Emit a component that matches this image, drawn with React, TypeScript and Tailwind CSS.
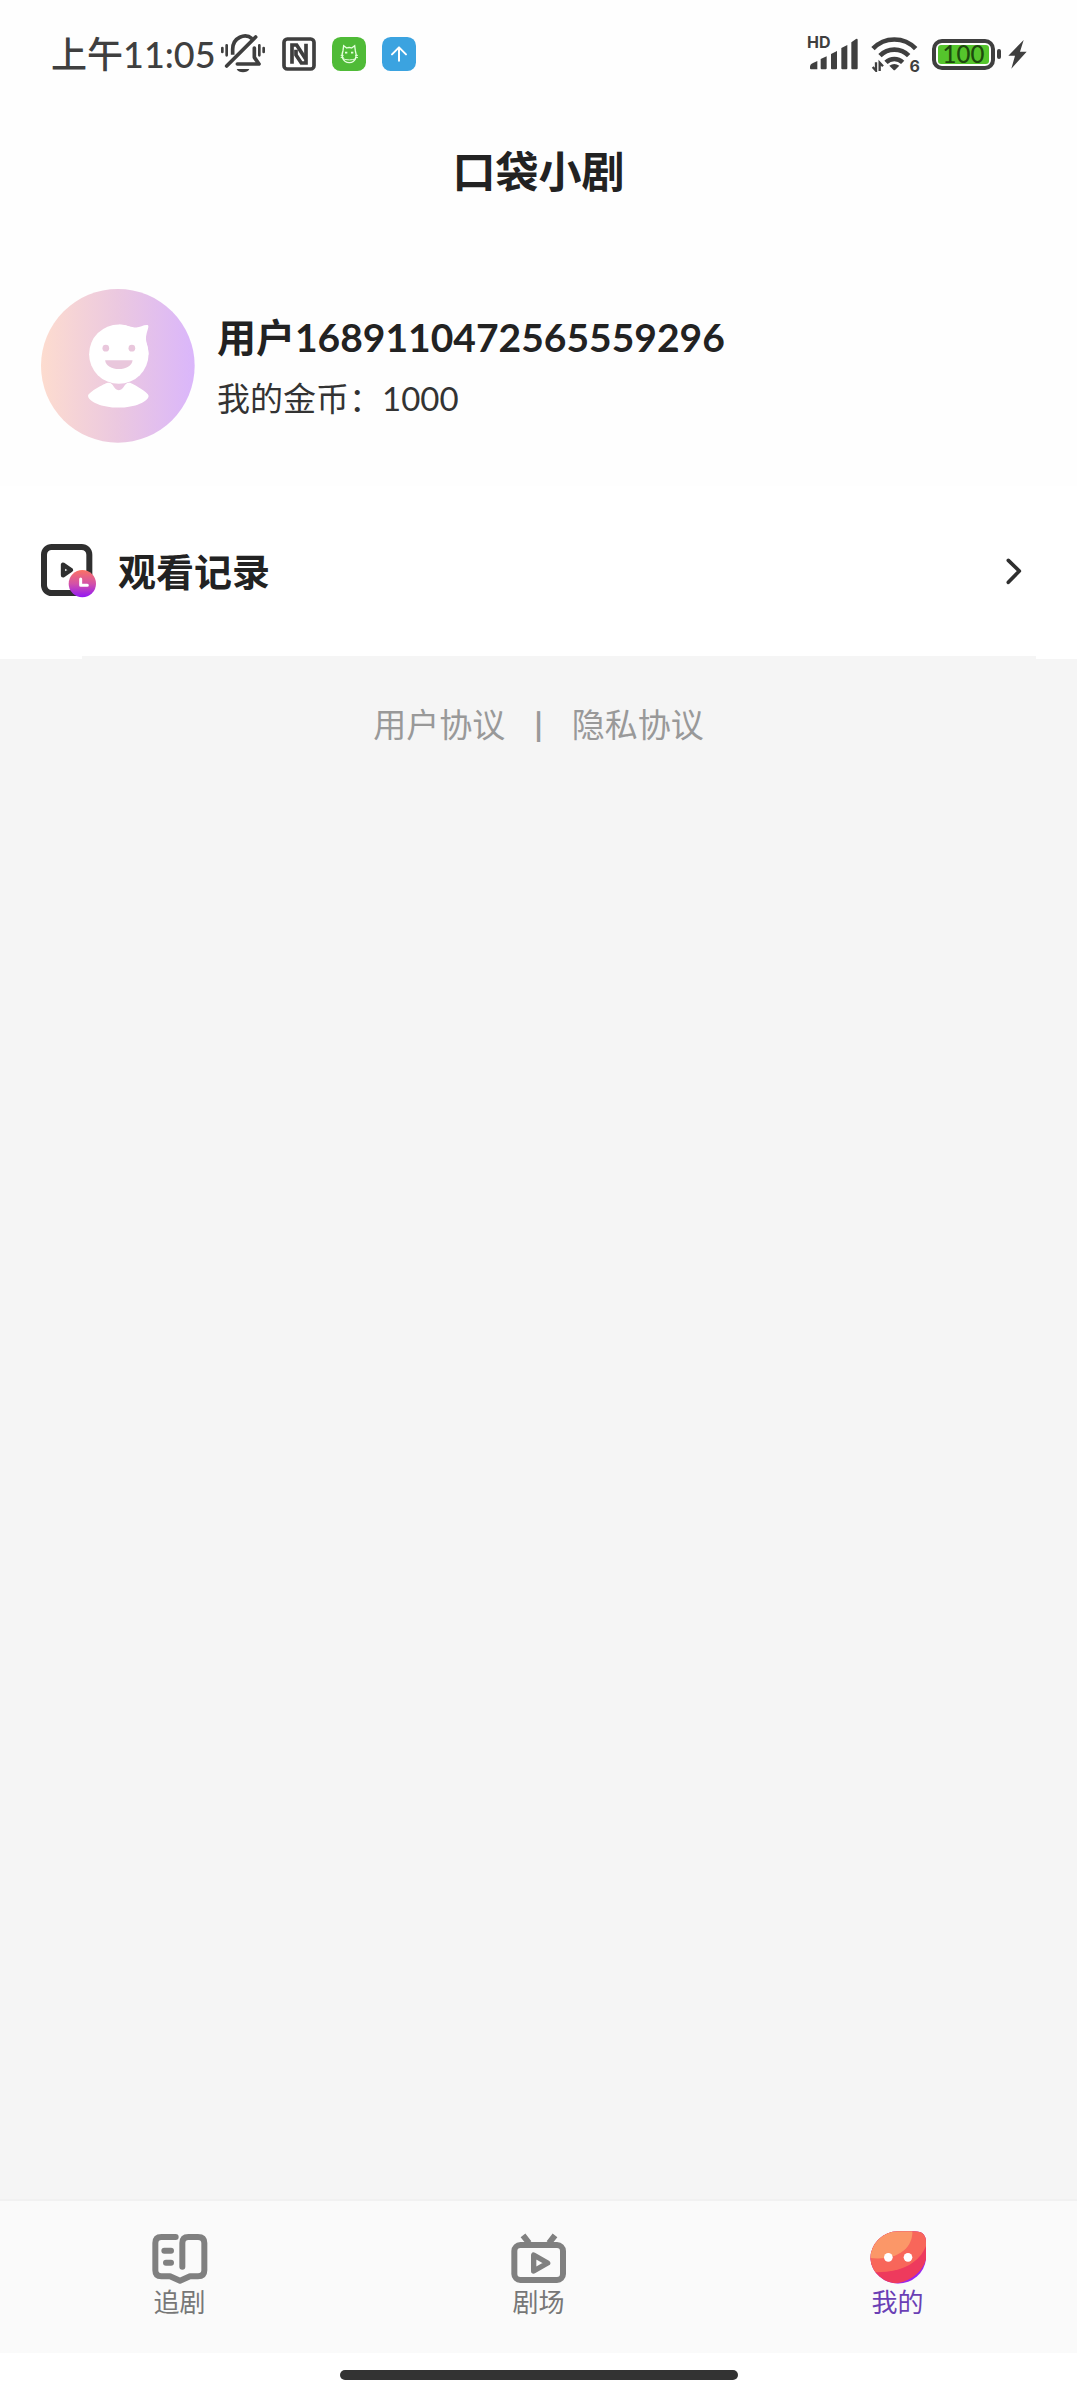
import React, { useState } from 'react';
import { clsx } from 'clsx';

const MutedBellIcon = () => (
  <svg viewBox="0 0 138 120" className="w-[46px] h-10" fill="none" stroke="#3f3f3f" strokeWidth="11" strokeLinecap="round">
    <path d="M7 42v12M20 34v30M118 34v30M131 42v12" strokeWidth="8" />
    <path d="M38 62V46C38 10 76-4 96 14" strokeLinecap="butt" />
    <path d="M103 42v28l14 20H52" strokeLinejoin="round" />
    <path d="M20 96 107 9" />
    <path d="M50 105h38c-5 13-33 13-38 0Z" fill="#3f3f3f" stroke="none" />
  </svg>
);

const NfcIcon = () => (
  <svg viewBox="0 0 102 102" className="size-[34px]" fill="none" stroke="#3f3f3f" strokeWidth="11">
    <rect x="6" y="6" width="90" height="90" rx="10" />
    <path d="M30 80V24h14l27 42" />
    <path d="M72 20v58H58L42 54V38" />
  </svg>
);

const CatAppIcon = () => (
  <svg viewBox="0 0 102 102" className="size-[34px]" fill="none" stroke="#e4ffdc" strokeWidth="4">
    <rect width="102" height="102" rx="26" fill="#4fbb37" stroke="none" />
    <path d="m33 41 2-15 9 7c5-2 10-2 15 0l9-7 2 15c6 16 2 34-18 36-21-2-25-20-19-36Z" />
    <path d="M26 55h9M26 62l9-1M69 55h9M69 61l9 1M32 65c12 5 28 5 40 0" strokeWidth="3" />
    <path d="M39 47h7M57 47h7" strokeWidth="5" />
  </svg>
);

const UploadAppIcon = () => (
  <svg viewBox="0 0 102 102" className="size-[34px]" fill="none" stroke="#fff" strokeWidth="6" strokeLinecap="round" strokeLinejoin="round">
    <rect width="102" height="102" rx="26" fill="#3ba3e0" stroke="none" />
    <path d="M51 71V32M30 52l21-21 21 21" />
  </svg>
);

const SignalIcon = () => (
  <div className="relative">
    <svg viewBox="0 0 156 108" className="w-[52px] h-9" fill="#3f3f3f">
      <path d="M9 93q0-9 9-12l13-6v25H12q-3 0-3-3zM41 69l18-8v36q0 3-3 3H44q-3 0-3-3zM72 54l18-9v52q0 3-3 3H75q-3 0-3-3zM103 36l18-9v70q0 3-3 3h-12q-3 0-3-3zM133 19l14-10q5-2 5 3v85q0 3-3 3h-13q-3 0-3-3z" />
    </svg>
    <span className="absolute -top-1 left-0 font-[Inter,sans-serif] text-base leading-5 font-bold">HD</span>
  </div>
);

const WifiIcon = () => (
  <div className="relative">
    <svg viewBox="0 0 144 108" className="w-12 h-9" fill="none" stroke="#3f3f3f" strokeWidth="14">
      <path d="M6 38a88 88 0 0 1 128 0M27 59a60 60 0 0 1 86 0M45 79a36 36 0 0 1 50 0" />
      <path d="M55 89q15-10 30 0l-12 12q-3 3-6 0Z" fill="#3f3f3f" stroke="none" />
      <path d="M15 79v25L5 93M26 105V80l10 11" strokeWidth="7" />
    </svg>
    <span className="absolute -right-px -bottom-1 font-[Inter,sans-serif] text-base leading-5 font-bold">6</span>
  </div>
);

const BoltIcon = () => (
  <svg viewBox="0 0 57 87" className="w-[19px] h-[29px]" fill="#3f3f3f">
    <path d="M47 0 1 47h20L10 86l46-51H36Z" />
  </svg>
);

const Battery = () => (
  <div className="flex items-center gap-[2px]">
    <div className="w-[63px] h-[31px] rounded-[10px] border-4 border-[#3f3f3f] p-[2px]">
      <div className="flex h-full items-center justify-center rounded-[3px] bg-[#55c52c] text-2xl leading-none font-medium text-[#1d4a0d]">
        100
      </div>
    </div>
    <div className="h-[10px] w-1 rounded-full bg-[#3f3f3f]" />
  </div>
);

const Avatar = () => (
  <svg viewBox="0 0 461 461" className="size-[154px] shrink-0">
    <defs>
      <linearGradient id="avatar-bg">
        <stop offset="0" stopColor="#fddccf" />
        <stop offset="0.5" stopColor="#ebc8e0" />
        <stop offset="1" stopColor="#dab6fb" />
      </linearGradient>
    </defs>
    <circle cx="230" cy="230" r="230" fill="url(#avatar-bg)" />
    <g fill="#fff">
      <circle cx="233" cy="195" r="89" />
      <path d="M233 106c22 1 38 9 52 9 12 0 20-7 32-7 6 0 5 6 3 12-5 16-8 28-4 41 3 10 6 24 6 36Z" />
      <path d="M200 281c18-3 16 22 33 22s15-25 33-22c10 3 56 29 56 39 0 16-40 35-90 35s-91-19-91-35c0-10 49-37 59-39Z" />
    </g>
    <g fill="#e9c7dc">
      <circle cx="194" cy="177" r="10" />
      <circle cx="272" cy="177" r="10" />
      <path d="M192 213h82c-2 35-80 35-82 0Z" />
    </g>
  </svg>
);

const HistoryIcon = () => (
  <svg viewBox="0 0 165 162" className="w-[55px] h-[54px]" fill="none">
    <defs>
      <linearGradient id="history-badge" x1="0" y1="0" x2="0" y2="1">
        <stop offset="0" stopColor="#fb7263" />
        <stop offset="0.5" stopColor="#d352a8" />
        <stop offset="1" stopColor="#9217f5" />
      </linearGradient>
    </defs>
    <rect x="9" y="9" width="136" height="138" rx="23" stroke="#2f2f2f" strokeWidth="18" />
    <path d="M66 62v32l24-16Z" stroke="#2f2f2f" strokeWidth="13" strokeLinejoin="round" />
    <circle cx="124" cy="119" r="41" fill="url(#history-badge)" />
    <path d="M119 105v19h20" stroke="#fff" strokeWidth="9" strokeLinecap="round" strokeLinejoin="round" />
  </svg>
);

const ChevronIcon = () => (
  <svg viewBox="0 0 48 81" className="w-4 h-[27px]" fill="none" stroke="#2f2f2f" strokeWidth="11" strokeLinecap="round" strokeLinejoin="round">
    <path d="m7 7 33 32L7 73" />
  </svg>
);

const BookIcon = () => (
  <svg viewBox="0 0 168 168" className="size-14" fill="none" stroke="#808080" strokeWidth="18" strokeLinecap="round" strokeLinejoin="round">
    <path d="M71 18H28Q10 18 10 36v82q0 18 18 18h26l30 13 30-13h24q19 0 19-18V36q0-18-19-18h-29q-18 0-18 18v71" />
    <path d="M37 59h20M42 95h15" />
  </svg>
);

const TheaterIcon = () => (
  <svg viewBox="0 0 168 168" className="size-14" fill="none" stroke="#808080" strokeWidth="18" strokeLinejoin="round">
    <rect x="10" y="42" width="146" height="105" rx="18" />
    <path d="m36 13 18 23M132 13l-18 23" />
    <path d="M68 72v48l42-24Z" strokeWidth="16" />
  </svg>
);

const MineIcon = () => (
  <svg viewBox="0 0 168 168" className="size-14">
    <clipPath id="face-shape">
      <path d="M84 1h50q34 0 34 34v49A84 83 0 0 1 1 84 83 83 0 0 1 84 1Z" />
    </clipPath>
    <g clipPath="url(#face-shape)">
      <rect width="168" height="168" fill="#9a25ee" />
      <path d="M0 0h168v88c-14 40-52 68-104 71L0 168Z" fill="#ee3a5d" />
      <path d="M0 0h168v45c-20 50-75 84-168 78Z" fill="#f8665a" />
      <path d="M0 0h127c2 52-45 90-127 81Z" fill="#fb9768" />
    </g>
    <circle cx="55" cy="79" r="13" fill="#fff" />
    <circle cx="114" cy="79" r="13" fill="#fff" />
  </svg>
);

const tabs = [
  { name: '追剧', icon: <BookIcon /> },
  { name: '剧场', icon: <TheaterIcon /> },
  { name: '我的', icon: <MineIcon /> },
];

const StatusBar = () => (
  <div className="flex h-[108px] items-center justify-between pl-[51px] pr-[50px] text-[#3f3f3f]">
    <div className="flex items-center">
      <span className="text-[36px] leading-10 font-medium">上午11:05</span>
      <div className="ml-1 flex items-center gap-4">
        <MutedBellIcon />
        <NfcIcon />
        <CatAppIcon />
        <UploadAppIcon />
      </div>
    </div>
    <div className="flex items-center">
      <SignalIcon />
      <div className="ml-3 mr-[13px]">
        <WifiIcon />
      </div>
      <Battery />
      <div className="ml-[7px]">
        <BoltIcon />
      </div>
    </div>
  </div>
);

const App = () => {
  const [activeTab, setActiveTab] = useState('我的');

  return (
    <div className="flex min-h-screen flex-col bg-[#f5f5f5] font-[Lato,'Noto_Sans_CJK_SC',sans-serif] text-[#222222]">
      <header className="bg-[#fefefe]">
        <StatusBar />
        <h1 className="flex h-32 items-center justify-center text-[43px] font-bold">口袋小剧</h1>
      </header>

      <main className="flex-1">
        {/* User info */}
        <section className="flex items-center gap-[22px] bg-[#fefefe] px-[41px] pt-[53px] pb-[43px]">
          <Avatar />
          <div className="pt-1">
            <p className="text-[39px] leading-[60px] font-bold">用户1689110472565559296</p>
            <p className="text-[33px] leading-[62px] text-[#333333]">我的金币：1000</p>
          </div>
        </section>

        {/* Watch history */}
        <a href="#history" className="flex h-[170px] items-center bg-white pl-[41px] pr-[55px]">
          <HistoryIcon />
          <span className="ml-[22px] flex-1 text-[38px] font-bold">观看记录</span>
          <ChevronIcon />
        </a>
        <div className="h-[3px] bg-white pl-[82px] pr-[41px]">
          <div className="h-full bg-[#f5f5f5]" />
        </div>

        {/* Agreements */}
        <div className="flex items-center justify-center gap-[29px] pt-10 text-[33px] leading-[50px] text-[#999999]">
          <a href="#terms">用户协议</a>
          <span className="font-bold">|</span>
          <a href="#privacy">隐私协议</a>
        </div>
      </main>

      <nav className="grid grid-cols-3 border-t-2 border-[#f1f1f1] bg-[#fafafa] pt-[30px] pb-9">
        {tabs.map((tab) => (
          <button
            key={tab.name}
            className={clsx(
              'flex flex-col items-center text-[26px] leading-[30px]',
              activeTab === tab.name ? 'text-[#6a3fb5]' : 'text-[#777777]'
            )}
            onClick={() => setActiveTab(tab.name)}
          >
            {tab.icon}
            {tab.name}
          </button>
        ))}
      </nav>
      <div className="flex h-11 justify-center bg-white pt-[17px]">
        <div className="h-[10px] w-[398px] rounded-full bg-[#333333]" />
      </div>
    </div>
  );
};

export default App;
